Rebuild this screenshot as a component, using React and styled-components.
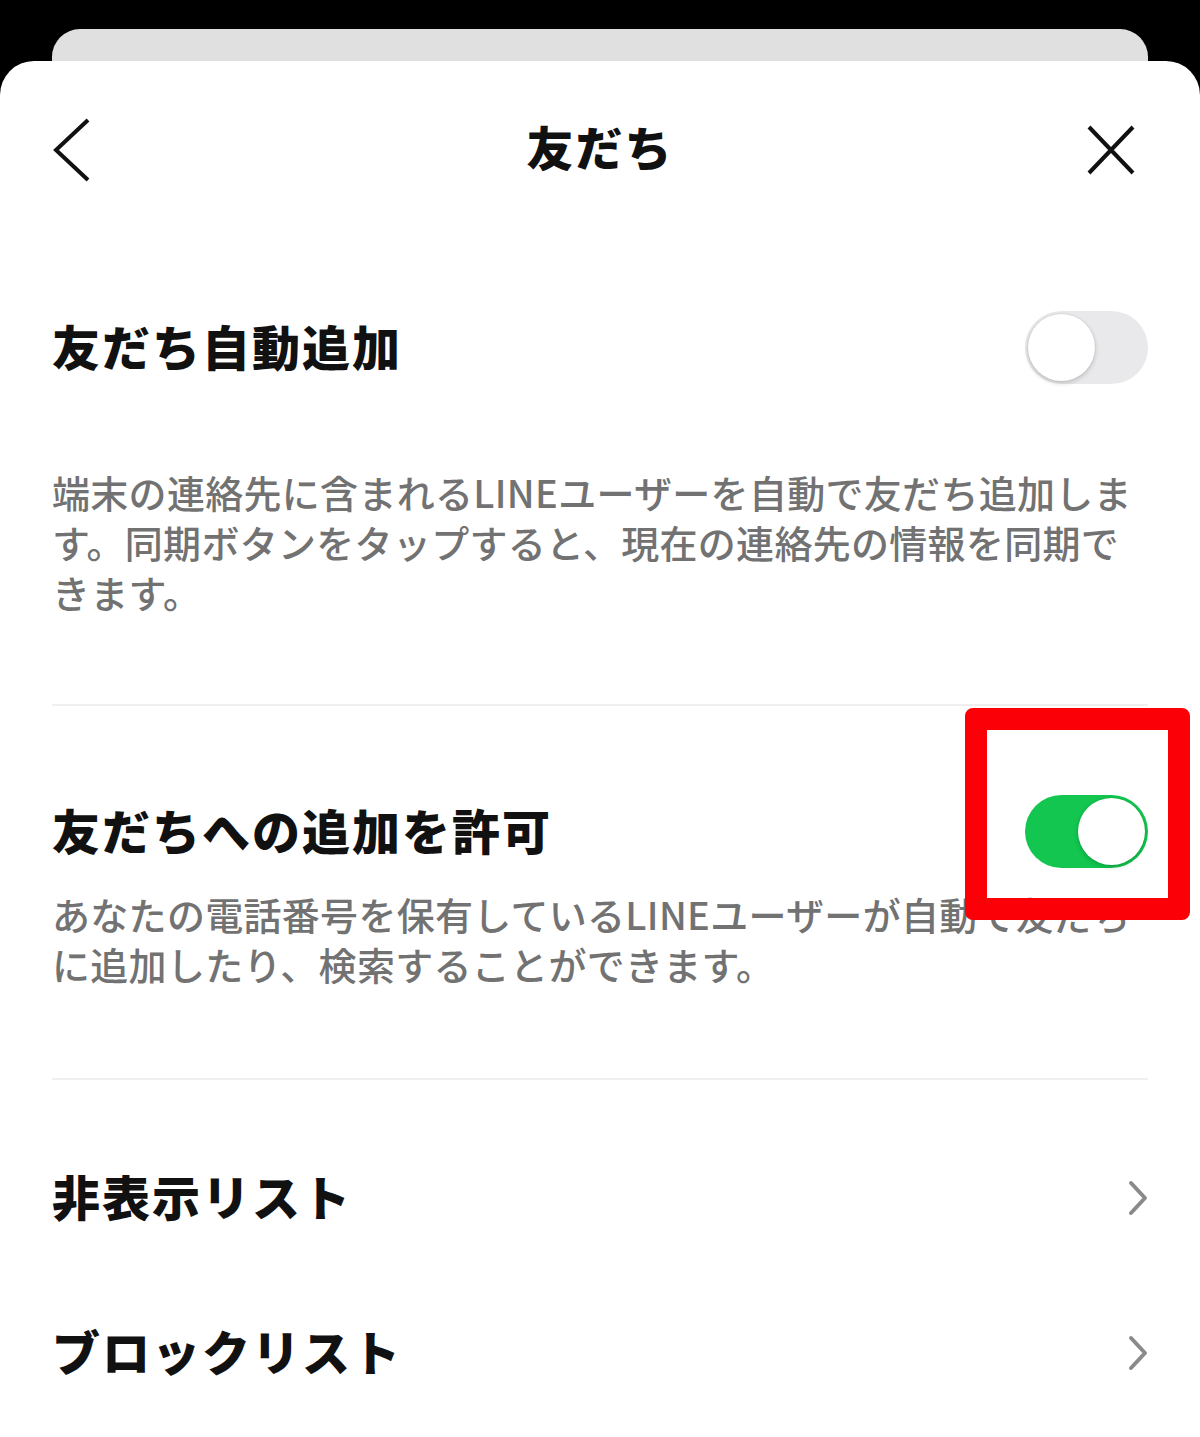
import React from "react";
import styled, { createGlobalStyle } from "styled-components";

const Global = createGlobalStyle`
  html, body { margin: 0; padding: 0; background: #000; }
  body { font-family: "Noto Sans CJK JP", "Noto Sans", sans-serif; }
  * { box-sizing: border-box; }
`;

const Page = styled.div`
  width: 1200px;
  min-height: 1437px;
  background: #000;
  padding-top: 29px;
  overflow: hidden;
`;

const BackCard = styled.div`
  margin: 0 52px;
  height: 32px;
  background: #e0e0e0;
  border-radius: 28px 28px 0 0;
`;

const Sheet = styled.div`
  background: #fff;
  border-radius: 34px 34px 0 0;
  min-height: 1376px;
  padding: 0 52px;
`;

const Header = styled.div`
  height: 178px;
  display: flex;
  align-items: center;
  justify-content: space-between;
`;

const IconButton = styled.div`
  width: 62px;
  height: 64px;
  display: flex;
  align-items: center;
  justify-content: ${(p) => (p.$end ? "flex-end" : "flex-start")};
  padding-right: ${(p) => (p.$end ? 13 : 0)}px;
`;

const HeaderTitle = styled.h1`
  margin: 0;
  padding-bottom: 10px;
  font-size: 47px;
  font-weight: 900;
  color: #111;
  letter-spacing: 2px;
`;

const Section = styled.section`
  padding-top: ${(p) => p.$top}px;
  padding-bottom: ${(p) => p.$bottom}px;
  border-bottom: ${(p) => (p.$divider ? "2px solid #efefef" : "none")};
`;

const Row = styled.div`
  height: ${(p) => p.$h || 100}px;
  display: flex;
  align-items: center;
  justify-content: space-between;
`;

const RowTitle = styled.div`
  font-size: 48px;
  font-weight: 900;
  color: #111;
  letter-spacing: 2px;
  padding-bottom: ${(p) => p.$lift || 4}px;
`;

const Desc = styled.p`
  margin: ${(p) => p.$top}px 0 0;
  font-size: 38px;
  line-height: 50px;
  letter-spacing: 0.3px;
  color: #727272;
  font-weight: 500;
`;

const ToggleWrap = styled.div`
  position: relative;
  width: 123px;
  height: 73px;
`;

const Track = styled.div`
  width: 123px;
  height: 73px;
  border-radius: 37px;
  background: ${(p) => (p.$on ? "#12c64f" : "#e9e9eb")};
  padding: 3px;
  display: flex;
  justify-content: ${(p) => (p.$on ? "flex-end" : "flex-start")};
`;

const Knob = styled.div`
  width: 67px;
  height: 67px;
  border-radius: 50%;
  background: #fff;
  box-shadow: 0 2px 5px rgba(0, 0, 0, 0.18), 0 0 0 1px rgba(0, 0, 0, 0.04);
`;

const Highlight = styled.div`
  position: absolute;
  left: -60px;
  top: -87px;
  width: 225px;
  height: 212px;
  border: 22px solid #fb0007;
  border-radius: 8px;
  pointer-events: none;
`;

const Toggle = ({ on, highlight }) => (
  <ToggleWrap>
    <Track $on={on}>
      <Knob />
    </Track>
    {highlight && <Highlight />}
  </ToggleWrap>
);

const ListItem = styled.div`
  height: 155px;
  display: flex;
  align-items: center;
  justify-content: space-between;
`;

const Chevron = () => (
  <svg width="22" height="36" viewBox="0 0 22 36">
    <path d="M5 3 L19 18 L5 33" fill="none" stroke="#8a8a8a" strokeWidth="4" strokeLinecap="round" strokeLinejoin="round" />
  </svg>
);

export default function App() {
  return (
    <>
      <Global />
      <Page>
        <BackCard />
        <Sheet>
          <Header>
            <IconButton>
              <svg width="40" height="64" viewBox="0 0 40 64">
                <path d="M36 2 L4 32 L36 62" fill="none" stroke="#111" strokeWidth="4" />
              </svg>
            </IconButton>
            <HeaderTitle>友だち</HeaderTitle>
            <IconButton $end>
              <svg width="48" height="50" viewBox="0 0 48 50">
                <path d="M2 2 L46 48 M46 2 L2 48" fill="none" stroke="#111" strokeWidth="4" />
              </svg>
            </IconButton>
          </Header>

          <Section $top={58} $bottom={87} $divider>
            <Row>
              <RowTitle>友だち自動追加</RowTitle>
              <Toggle on={false} />
            </Row>
            <Desc $top={70}>
              端末の連絡先に含まれるLINEユーザーを自動で友だち追加します。同期ボタンをタップすると、現在の連絡先の情報を同期できます。
            </Desc>
          </Section>

          <Section $top={75} $bottom={89} $divider>
            <Row>
              <RowTitle>友だちへの追加を許可</RowTitle>
              <Toggle on highlight />
            </Row>
            <Desc $top={8}>
              あなたの電話番号を保有しているLINEユーザーが自動で友だちに追加したり、検索することができます。
            </Desc>
          </Section>

          <Section $top={40} $bottom={0}>
            <ListItem>
              <RowTitle $lift={6}>非表示リスト</RowTitle>
              <Chevron />
            </ListItem>
            <ListItem>
              <RowTitle $lift={6}>ブロックリスト</RowTitle>
              <Chevron />
            </ListItem>
          </Section>
        </Sheet>
      </Page>
    </>
  );
}
